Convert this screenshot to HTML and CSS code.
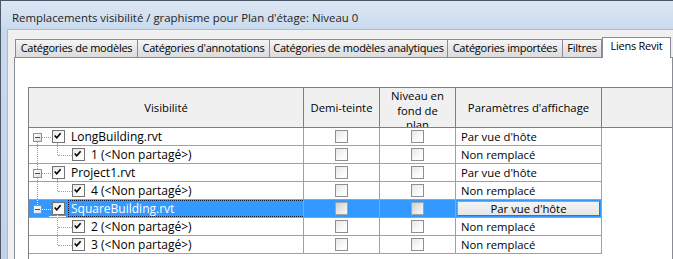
FILE: index.html
```html
<!DOCTYPE html>
<html lang="fr">
<head>
  <meta charset="UTF-8" />
  <title>Remplacements visibilité / graphisme</title>
  <link rel="stylesheet" href="styles.css">
</head>
<body>
  <div class="window">
    <div class="titlebar">Remplacements visibilité / graphisme pour Plan d'étage: Niveau 0</div>

    <div class="client">
      <!-- Tabs -->
      <div class="tabs">
        <div class="tab tab-models">Catégories de modèles</div>
        <div class="tab tab-annot">Catégories d'annotations</div>
        <div class="tab tab-analytic">Catégories de modèles analytiques</div>
        <div class="tab tab-imported">Catégories importées</div>
        <div class="tab tab-filters">Filtres</div>
        <div class="tab tab-links active">Liens Revit</div>
      </div>

      <div class="panel">
        <div class="grid">
          <div class="grid-head">
            <div class="head-cell">Visibilité</div>
            <div class="head-cell">Demi-teinte</div>
            <div class="head-cell head-wrap">Niveau en fond de plan</div>
            <div class="head-cell">Paramètres d'affichage</div>
            <div class="head-cell head-filler"></div>
          </div>

          <!-- LongBuilding -->
          <div class="row">
            <div class="cell tree root">
              <span class="line v-down"></span>
              <span class="line v-kid-down"></span>
              <span class="line h-root"></span>
              <span class="expander"></span>
              <span class="check on"><svg viewBox="0 0 13 13"><path d="M3 6.3l2.4 2.6L10 3.6"/></svg></span>
              <span class="label">LongBuilding.rvt</span>
            </div>
            <div class="cell box"><span class="check"></span></div>
            <div class="cell box"><span class="check"></span></div>
            <div class="cell text">Par vue d'hôte</div>
          </div>
          <div class="row">
            <div class="cell tree kid">
              <span class="line v-through"></span>
              <span class="line v-kid-up"></span>
              <span class="line h-kid"></span>
              <span class="check on"><svg viewBox="0 0 13 13"><path d="M3 6.3l2.4 2.6L10 3.6"/></svg></span>
              <span class="label">1 (&lt;Non partagé&gt;)</span>
            </div>
            <div class="cell box"><span class="check"></span></div>
            <div class="cell box"><span class="check"></span></div>
            <div class="cell text">Non remplacé</div>
          </div>

          <!-- Project1 -->
          <div class="row">
            <div class="cell tree root">
              <span class="line v-up"></span>
              <span class="line v-down"></span>
              <span class="line v-kid-down"></span>
              <span class="line h-root"></span>
              <span class="expander"></span>
              <span class="check on"><svg viewBox="0 0 13 13"><path d="M3 6.3l2.4 2.6L10 3.6"/></svg></span>
              <span class="label">Project1.rvt</span>
            </div>
            <div class="cell box"><span class="check"></span></div>
            <div class="cell box"><span class="check"></span></div>
            <div class="cell text">Par vue d'hôte</div>
          </div>
          <div class="row">
            <div class="cell tree kid">
              <span class="line v-through"></span>
              <span class="line v-kid-up"></span>
              <span class="line h-kid"></span>
              <span class="check on"><svg viewBox="0 0 13 13"><path d="M3 6.3l2.4 2.6L10 3.6"/></svg></span>
              <span class="label">4 (&lt;Non partagé&gt;)</span>
            </div>
            <div class="cell box"><span class="check"></span></div>
            <div class="cell box"><span class="check"></span></div>
            <div class="cell text">Non remplacé</div>
          </div>

          <!-- SquareBuilding (selected) -->
          <div class="row selected">
            <div class="cell tree root">
              <span class="line v-up"></span>
              <span class="line v-kid-down"></span>
              <span class="line h-root"></span>
              <span class="expander"></span>
              <span class="check on"><svg viewBox="0 0 13 13"><path d="M3 6.3l2.4 2.6L10 3.6"/></svg></span>
              <span class="focus-mark"></span>
              <span class="label">SquareBuilding.rvt</span>
            </div>
            <div class="cell box"><span class="check"></span></div>
            <div class="cell box"><span class="check"></span></div>
            <div class="cell text"><span class="btn">Par vue d'hôte</span></div>
          </div>
          <div class="row">
            <div class="cell tree kid">
              <span class="line v-kid-through"></span>
              <span class="line h-kid"></span>
              <span class="check on"><svg viewBox="0 0 13 13"><path d="M3 6.3l2.4 2.6L10 3.6"/></svg></span>
              <span class="label">2 (&lt;Non partagé&gt;)</span>
            </div>
            <div class="cell box"><span class="check"></span></div>
            <div class="cell box"><span class="check"></span></div>
            <div class="cell text">Non remplacé</div>
          </div>
          <div class="row">
            <div class="cell tree kid">
              <span class="line v-kid-up"></span>
              <span class="line h-kid"></span>
              <span class="check on"><svg viewBox="0 0 13 13"><path d="M3 6.3l2.4 2.6L10 3.6"/></svg></span>
              <span class="label">3 (&lt;Non partagé&gt;)</span>
            </div>
            <div class="cell box"><span class="check"></span></div>
            <div class="cell box"><span class="check"></span></div>
            <div class="cell text">Non remplacé</div>
          </div>
        </div>
      </div>
    </div>
  </div>
</body>
</html>
```

FILE: styles.css
```css
body {
  margin: 0;
  width: 673px;
  height: 259px;
  overflow: hidden;
  font-family: "Open Sans", sans-serif;
  font-size: 11.3px;
  color: #000;
  background: #fff;
}

.window {
  height: 259px;
  box-sizing: border-box;
  border-top: 1px solid #4b5869;
  border-left: 1px solid #4b5869;
  background: linear-gradient(#dce7f4, #c9d9ed 30px, #c2d3e9);
  display: flex;
  flex-direction: column;
}

.titlebar {
  height: 28px;
  box-sizing: border-box;
  padding: 9px 0 0 11px;
  line-height: 16px;
  font-size: 11.4px;
  color: #1e1e1e;
}

.client {
  flex: 1;
  margin-left: 6px;
  border-top: 1px solid #a9bbd1;
  border-left: 1px solid #a9bbd1;
  background: #f0f0f0;
  padding: 7px 0 0 6px;
  overflow: hidden;
}

/* Tabs */
.tabs {
  display: flex;
  align-items: flex-end;
  height: 20px;
  padding-left: 1px;
}

.tab {
  height: 18px;
  box-sizing: border-box;
  border: 1px solid #898c95;
  border-bottom: none;
  margin-right: -1px;
  background: linear-gradient(#f6f6f6, #e6e6e6 50%, #dcdcdc);
  font-size: 11px;
  letter-spacing: -0.25px;
  line-height: 16px;
  text-align: center;
  white-space: nowrap;
  overflow: hidden;
  flex: none;
}

.tab-models { width: 123px; }
.tab-annot { width: 133px; }
.tab-analytic { width: 179px; }
.tab-imported { width: 116px; }
.tab-filters { width: 40px; }

.tab.active {
  width: 69px;
  height: 21px;
  margin-left: 1px;
  margin-bottom: -1px;
  background: #fff;
  position: relative;
  z-index: 1;
}

.panel {
  height: 300px;
  border: 1px solid #898c95;
  background: #fff;
  padding: 29px 0 0 13px;
}

/* Grid */
.grid {
  height: 250px;
  border-top: 1px solid #7f7f7f;
  border-left: 1px solid #7f7f7f;
}

.grid-head {
  display: grid;
  grid-template-columns: 275px 76px 76px 146px 1fr;
  height: 40px;
  box-sizing: border-box;
  border-bottom: 1px solid #7f7f7f;
  background: #f0f0f0;
}

.head-cell {
  display: flex;
  align-items: center;
  justify-content: center;
  text-align: center;
  border-right: 1px solid #7f7f7f;
  overflow: hidden;
}

.head-wrap {
  align-items: flex-start;
  padding: 1px 8px 0;
  line-height: 14.5px;
}

.head-filler {
  border-right: none;
}

.row {
  display: grid;
  grid-template-columns: 275px 76px 76px 146px;
  width: 573px;
}

.cell {
  height: 18px;
  box-sizing: border-box;
  border-right: 1px solid #a0a0a0;
  border-bottom: 1px solid #a0a0a0;
  line-height: 17px;
  white-space: nowrap;
}

.cell.box {
  display: flex;
  align-items: center;
  justify-content: center;
}

.cell.text {
  padding-left: 5px;
  display: flex;
}

/* Tree */
.tree {
  position: relative;
  display: flex;
  align-items: center;
  font-size: 12px;
}

.tree.root { padding-left: 23px; }
.tree.kid { padding-left: 43px; }

.label {
  margin-left: 6px;
}

.line {
  position: absolute;
  width: 0;
  height: 0;
  border: 0 dotted #a0a0a0;
}

.v-up { left: 8px; top: 0; height: 5px; border-left-width: 1px; }
.v-down { left: 8px; top: 14px; height: 3px; border-left-width: 1px; }
.v-through { left: 8px; top: 0; height: 17px; border-left-width: 1px; }
.v-kid-down { left: 28px; top: 15px; height: 2px; border-left-width: 1px; }
.v-kid-up { left: 28px; top: 0; height: 9px; border-left-width: 1px; }
.v-kid-through { left: 28px; top: 0; height: 17px; border-left-width: 1px; }
.h-root { left: 13px; top: 9px; width: 9px; border-top-width: 1px; }
.h-kid { left: 29px; top: 9px; width: 14px; border-top-width: 1px; }

.expander {
  position: absolute;
  left: 4px;
  top: 5px;
  width: 9px;
  height: 9px;
  box-sizing: border-box;
  border: 1px solid #919191;
  background: linear-gradient(135deg, #fff, #dedede);
}

.expander::after {
  content: "";
  position: absolute;
  left: 1px;
  top: 3px;
  width: 5px;
  height: 1px;
  background: #2b4a7e;
}

/* Checkboxes */
.check {
  width: 13px;
  height: 13px;
  box-sizing: border-box;
  border: 1px solid #8f8f8f;
  background: linear-gradient(135deg, #e6e6e6, #fdfdfd 70%);
  flex: none;
  display: block;
}

.check svg {
  display: block;
  width: 11px;
  height: 11px;
  margin: 0;
}

.check.on {
  border-color: #737373;
}

.check path {
  fill: none;
  stroke: #000;
  stroke-width: 1.9;
  transform: translate(-1px, -1px);
}

/* Selected row */
.row.selected .cell {
  background: #3399ff;
  color: #fff;
}

.row.selected .line {
  border-color: #fff;
}

.row.selected .label {
  flex: 1;
  align-self: stretch;
  margin-left: 3px;
  padding-left: 2px;
  border: 1px dotted #0d1e3a;
  border-right: none;
  line-height: 15px;
}

.row.selected .box .check {
  border-color: #a3a3a3;
  background: linear-gradient(135deg, #cfcfcf, #f2f2f2 80%);
}

.focus-mark {
  position: absolute;
  left: 20px;
  top: 16px;
  width: 17px;
  height: 1px;
  background: #fff;
}

.row.selected .cell.text {
  padding: 1px;
}

.btn {
  flex: 1;
  box-sizing: border-box;
  height: 15px;
  border: 1px solid #a0a0a0;
  border-right-color: #6a6a6a;
  border-bottom-color: #6a6a6a;
  background: linear-gradient(#f4f4f4, #e6e6e6);
  color: #000;
  text-align: center;
  line-height: 13px;
}
```
